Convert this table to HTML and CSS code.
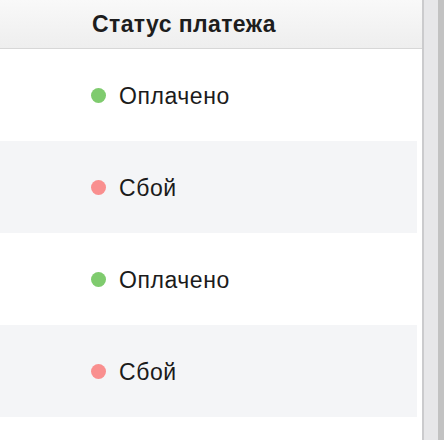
FILE: index.html
```html
<!DOCTYPE html>
<html lang="ru">
<head>
<meta charset="utf-8">
<link rel="stylesheet" href="styles.css">
</head>
<body>
<div class="layout">
  <div class="table">
    <div class="head"><span class="head-title">Статус платежа</span></div>
    <div class="rows">
      <div class="row"><span class="dot dot-ok"></span><span class="label">Оплачено</span></div>
      <div class="row row-alt"><span class="dot dot-fail"></span><span class="label">Сбой</span></div>
      <div class="row"><span class="dot dot-ok"></span><span class="label">Оплачено</span></div>
      <div class="row row-alt"><span class="dot dot-fail"></span><span class="label">Сбой</span></div>
    </div>
  </div>
  <div class="side"><div class="side-inner"></div><div class="side-edge"></div></div>
</div>
</body>
</html>
```
FILE: styles.css
```css
html, body {
  margin: 0;
  padding: 0;
  background: #ffffff;
}
body {
  font-family: "Liberation Sans", Arial, sans-serif;
  color: #1b1b1b;
}
.layout {
  display: flex;
  height: 440px;
  width: 444px;
  overflow: hidden;
}
.table {
  width: 422px;
  flex: none;
}
.head {
  height: 48px;
  border-bottom: 1px solid #d7d7d7;
  background: linear-gradient(#f9f9f9, #eeeeee);
  display: flex;
  align-items: center;
  padding-left: 92px;
}
.head-title {
  font-weight: bold;
  font-size: 23px;
  letter-spacing: 0.4px;
  color: #1d1d1d;
}
.rows {
  padding-right: 5px;
}
.row {
  height: 92px;
  display: flex;
  align-items: center;
  padding-left: 91px;
  gap: 13px;
}
.row-alt {
  background: #f4f5f7;
}
.dot {
  width: 15px;
  height: 15px;
  border-radius: 50%;
  flex: none;
}
.dot-ok { background: #7fcb6e; }
.dot-fail { background: #f98f8f; }
.label {
  font-size: 23px;
  letter-spacing: 0.55px;
  padding-top: 2px;
}
.side {
  flex: 1;
  display: flex;
  border-left: 2px solid #cbcbcd;
}
.side-inner {
  flex: 1;
  background: #e7e7e9;
}
.side-edge {
  width: 6px;
  background: #c2c2c2;
}
```
